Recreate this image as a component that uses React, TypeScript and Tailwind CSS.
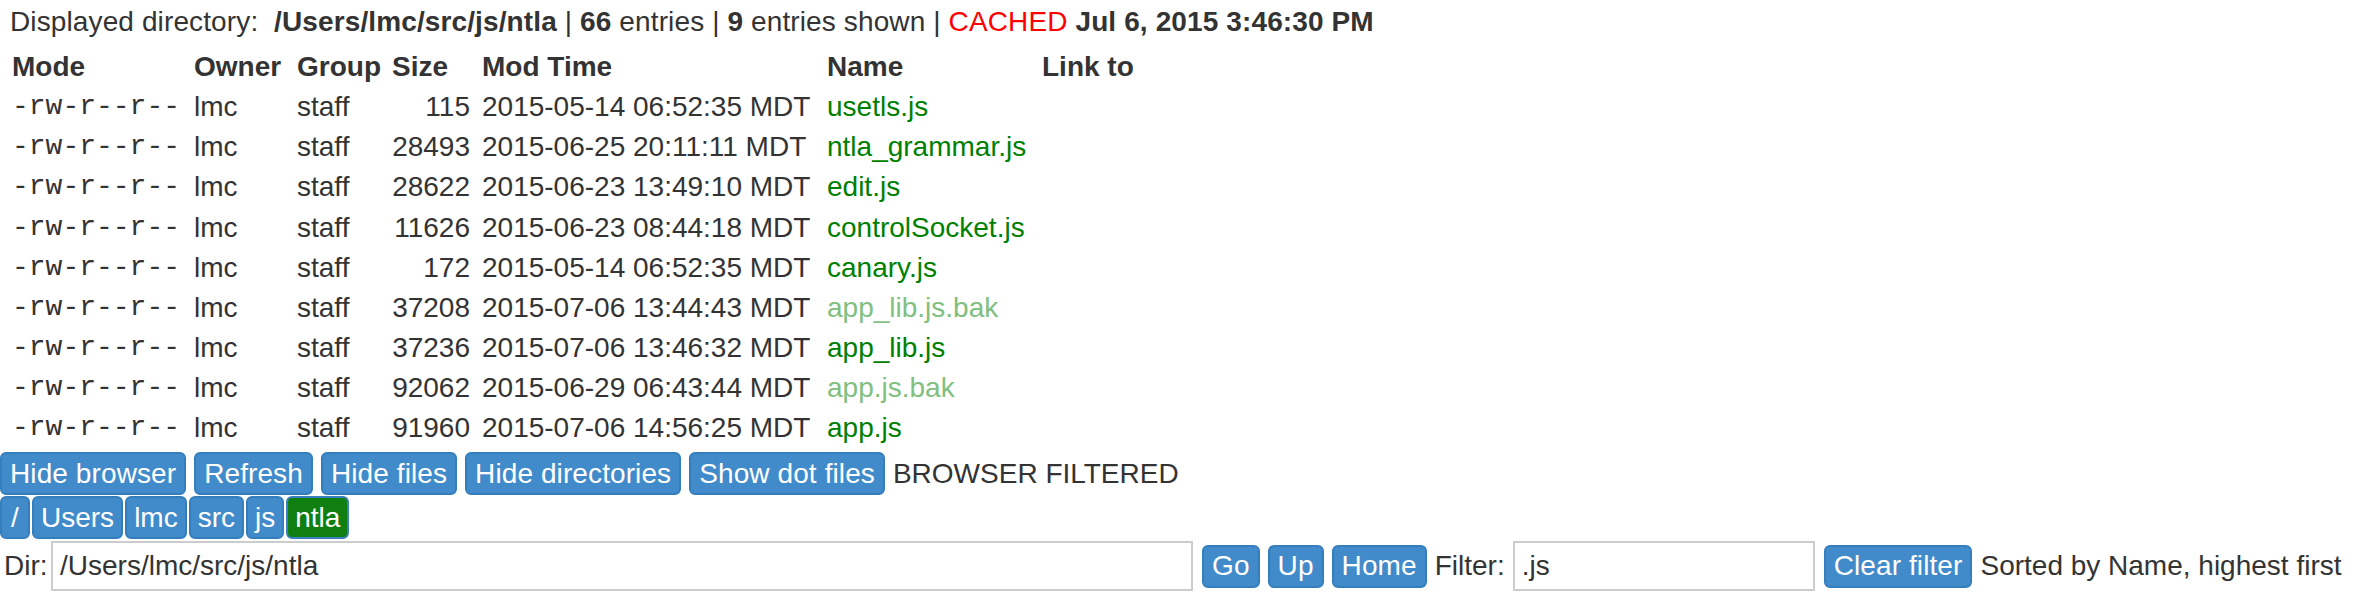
import React from 'react';

interface Entry {
  mode: string;
  owner: string;
  group: string;
  size: number;
  mtime: string;
  name: string;
  backup?: boolean;
}

const entries: Entry[] = [
  { mode: '-rw-r--r--', owner: 'lmc', group: 'staff', size: 115, mtime: '2015-05-14 06:52:35 MDT', name: 'usetls.js' },
  { mode: '-rw-r--r--', owner: 'lmc', group: 'staff', size: 28493, mtime: '2015-06-25 20:11:11 MDT', name: 'ntla_grammar.js' },
  { mode: '-rw-r--r--', owner: 'lmc', group: 'staff', size: 28622, mtime: '2015-06-23 13:49:10 MDT', name: 'edit.js' },
  { mode: '-rw-r--r--', owner: 'lmc', group: 'staff', size: 11626, mtime: '2015-06-23 08:44:18 MDT', name: 'controlSocket.js' },
  { mode: '-rw-r--r--', owner: 'lmc', group: 'staff', size: 172, mtime: '2015-05-14 06:52:35 MDT', name: 'canary.js' },
  { mode: '-rw-r--r--', owner: 'lmc', group: 'staff', size: 37208, mtime: '2015-07-06 13:44:43 MDT', name: 'app_lib.js.bak', backup: true },
  { mode: '-rw-r--r--', owner: 'lmc', group: 'staff', size: 37236, mtime: '2015-07-06 13:46:32 MDT', name: 'app_lib.js' },
  { mode: '-rw-r--r--', owner: 'lmc', group: 'staff', size: 92062, mtime: '2015-06-29 06:43:44 MDT', name: 'app.js.bak', backup: true },
  { mode: '-rw-r--r--', owner: 'lmc', group: 'staff', size: 91960, mtime: '2015-07-06 14:56:25 MDT', name: 'app.js' },
];

const crumbs = ['Users', 'lmc', 'src', 'js'];

function Btn({ children, green, className = 'px-[8px] tracking-[0.1px]' }: { children: React.ReactNode; green?: boolean; className?: string }) {
  return (
    <button
      className={`h-[43px] border-2 rounded-[6px] text-white leading-none ${
        green ? 'bg-[#0f7f12] border-[#3a7fbf]' : 'bg-[#428bca] border-[#357ebd]'
      } ${className}`}
    >
      {children}
    </button>
  );
}

export default function App() {
  const rowGrid = 'grid grid-cols-[188px_103px_95px_90px_345px_215px_1fr] h-[40.15px] items-center';

  return (
    <div className="w-[2362px] h-[592px] overflow-hidden bg-white text-[#333] text-[28px] leading-[40px] font-['Liberation_Sans',Arial,sans-serif]">
      {/* Status line */}
      <div className="h-[47px] pl-[10px] leading-[43px] whitespace-nowrap tracking-[0.12px]">
        Displayed directory:&nbsp; <b>/Users/lmc/src/js/ntla</b> | <b>66</b> entries | <b>9</b> entries shown |{' '}
        <span className="text-[#ff0000]">CACHED</span> <b>Jul 6, 2015 3:46:30 PM</b>
      </div>

      {/* Listing */}
      <div>
        <div className={`${rowGrid} font-bold`}>
          <div className="pl-[12px] pr-[6px]">Mode</div>
          <div className="px-[6px]">Owner</div>
          <div className="px-[6px]">Group</div>
          <div className="px-[6px]">Size</div>
          <div className="px-[6px]">Mod Time</div>
          <div className="px-[6px]">Name</div>
          <div className="px-[6px]">Link to</div>
        </div>
        {entries.map((e) => (
          <div key={e.name} className={rowGrid}>
            <div className="pl-[12px] pr-[6px] font-['Liberation_Mono','Courier_New',monospace]">{e.mode}</div>
            <div className="px-[6px]">{e.owner}</div>
            <div className="px-[6px]">{e.group}</div>
            <div className="px-[6px] text-right">{e.size}</div>
            <div className="px-[6px] whitespace-nowrap">{e.mtime}</div>
            <div className={`px-[6px] ${e.backup ? 'text-[#80bf80]' : 'text-[#008000]'}`}>{e.name}</div>
            <div className="px-[6px]"></div>
          </div>
        ))}
      </div>

      {/* Browser controls */}
      <div className="mt-[4px] flex items-center gap-[8px]">
        <Btn>Hide browser</Btn>
        <Btn>Refresh</Btn>
        <Btn>Hide files</Btn>
        <Btn>Hide directories</Btn>
        <Btn>Show dot files</Btn>
        <span>BROWSER FILTERED</span>
      </div>

      {/* Breadcrumbs */}
      <div className="mt-[1px] flex items-center gap-[2px]">
        <Btn className="w-[30px]">/</Btn>
        {crumbs.map((c) => (
          <Btn key={c} className="px-[7px]">{c}</Btn>
        ))}
        <Btn green className="px-[7px]">ntla</Btn>
      </div>

      {/* Dir / filter row */}
      <div className="mt-[2px] flex items-center whitespace-nowrap">
        <span className="pl-[4px] w-[51px]">Dir:</span>
        <div className="w-[1142px] h-[50px] border-2 border-[#cccccc] px-[7px] flex items-center">/Users/lmc/src/js/ntla</div>
        <div className="ml-[9px] flex items-center gap-[8px]">
          <Btn>Go</Btn>
          <Btn>Up</Btn>
          <Btn>Home</Btn>
        </div>
        <span className="ml-[8px] w-[78px]">Filter:</span>
        <div className="w-[302px] h-[50px] border-2 border-[#cccccc] px-[7px] flex items-center">.js</div>
        <div className="ml-[9px]">
          <Btn>Clear filter</Btn>
        </div>
        <span className="ml-[8px]">Sorted by Name, highest first</span>
      </div>
    </div>
  );
}
